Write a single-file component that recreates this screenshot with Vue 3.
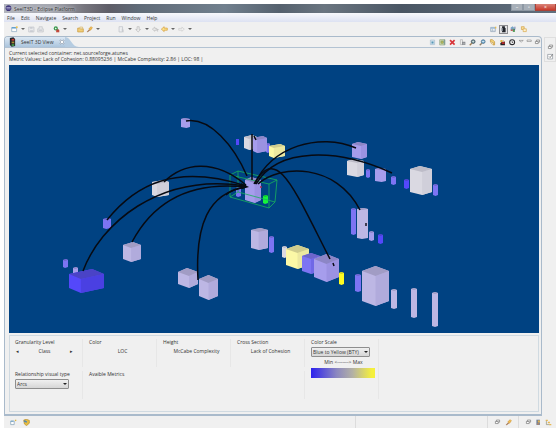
<script setup>
import { h, ref } from 'vue'

const glyphs = {
  app: [['M5 0.5A4 4 0 1 0 5 8.5A4 4 0 0 0 5 0.5Z', '#3c3478'], ['M2 3.5H8M2 5.5H8', 'none', '#c9c4e8']],
  newItem: [['M1 2.5H8V8H1Z', '#fdfdfd', '#8aa6c0'], ['M1 1.5H7V3.5H1Z', '#5d9fd0'], ['M7 0.5H9.5V3H7Z', '#eabf4a']],
  save: [['M1 1.5H8.5V8.5H1Z', '#e9eaec', '#bfc2c8'], ['M3 1.5H6.5V4H3ZM3 6H7V8.5H3Z', '#c9ccd2']],
  saveAll: [['M3 1H7.5V4H9V8.5H1V4H3Z', '#e6e6e8', '#c3c5ca'], ['M2.5 5H7.5V7H2.5Z', '#c9ccd2']],
  run: [['M4 0.5A3 3 0 1 0 4 6.5A3 3 0 0 0 4 0.5Z', '#3e9a50'], ['M3 2L5.5 3.5L3 5Z', '#fff'], ['M4.5 5.5H9V9H4.5Z', '#c44a3c'], ['M6 4.5H8V6H6Z', '#7d3a30']],
  folder: [['M1 3H4L5 4H9V8.5H1Z', '#f2ce78', '#c99a3e'], ['M4 1.5H8V4H4Z', '#f7edd0', '#d5b670']],
  torch: [['M1 8.5L4.5 4.5L6 6L2.5 9Z', '#a77b58'], ['M4 4L7.5 1L9 2.5L6.5 6Z', '#f1bd52', '#d29a3a']],
  page: [['M1.5 1H6.5V8.5H1.5Z', '#eeeff1', '#bcc0c6'], ['M6 4V8M7.5 5V9', 'none', '#c5c8cc']],
  down: [['M3 1H6V5H8L4.5 8.5L1 5H3Z', '#ececec', '#bcbcbc']],
  back: [['M0.5 4.5L4 1.5V3.5H7V6H4V7.5Z', '#eaeaea', '#bcbcbc'], ['M8 5V8M9.5 5H7', 'none', '#bcbcbc']],
  backGold: [['M0.5 4.5L4.5 1V3H9V6H4.5V8Z', '#fae08c', '#d79d37']],
  next: [['M9 4.5L5.5 1.5V3.5H1V6H5.5V7.5Z', '#f0f0f0', '#cfcfcf']],
  openView: [['M1 2H7.5V8H1Z', '#fff', '#8b9db3'], ['M1 2H7.5V4H1Z', '#9cbad6'], ['M7 1H9V3.5H7Z', '#e8bd4b'], ['M3.5 4V8M1 6H7.5', 'none', '#a9b9c9']],
  seeit: [['M3 0.5H7V3H8V9H3Z', '#22252c'], ['M2 3H4V7H2Z', '#8d939e']],
  java: [['M1 2L4 0.5L6 3L4 6H1Z', '#79a4c7'], ['M4 4H7V8.5H4Z', '#599c5a'], ['M7 1V4.5L6 6', 'none', '#304c94'], ['M1 5H4V7H1Z', '#bd554a']],
  sync: [['M2 1H6V5H2Z', '#f7df9d', '#d4a245'], ['M4.5 4H9V8H4.5Z', '#fff3cf', '#d8a84d']],
  doc: [['M2 1.5H8V8H2Z', '#d8e8f2', '#a6bccd'], ['M3.5 3.5H6.5V6.5H3.5Z', '#5796b4']],
  layers: [['M1 1H8.5V8.5H1Z', '#d8dfa9', '#8fa58b'], ['M3 3H6V6H3Z', '#e8cf46', '#6e8f68'], ['M7.5 1V8', 'none', '#4d7b94']],
  cross: [['M1.5 1.5L8 8M8 1.5L1.5 8', 'none', '#d8353a', 2.4]],
  trash: [['M2 1H5V8H2Z', '#efefef', '#b1b1b1'], ['M4.5 4H9V8.5H4.5Z', '#777b80'], ['M6 5V8M7.5 5V8', 'none', '#d0d0d0']],
  zoomIn: [['M6 1A2.7 2.7 0 1 0 6 6.4A2.7 2.7 0 0 0 6 1Z', '#5c7c89', '#3c4d58'], ['M4 6L1 9', 'none', '#9b7b50', 1.8], ['M4.5 3.7H7.5M6 2.2V5.2', 'none', '#e9f6e6']],
  zoomOut: [['M6 1A2.7 2.7 0 1 0 6 6.4A2.7 2.7 0 0 0 6 1Z', '#75aed0', '#406684'], ['M4 6L1 9', 'none', '#8e806b', 1.8], ['M4.5 3.7H7.5', 'none', '#fff']],
  link: [['M2 1H5L8 4V8.5H6V5L2 4Z', '#f4d881', '#c19133'], ['M2 5L5 8', 'none', '#d4a244']],
  figure: [['M4 4H8.5V9H2V6Z', '#252326'], ['M2 1.5H5V4.5H2Z', '#e3b33c'], ['M4 4.5H8V7H4Z', '#c52a2c'], ['M6 2L8 4', 'none', '#ab6b32']],
  target: [['M4.5 1A3.5 3.5 0 1 0 4.5 8A3.5 3.5 0 0 0 4.5 1Z', '#fafafa', '#292a2e', 1.5], ['M4.5 3V5H6', 'none', '#222']],
  menu: [['M1.5 2H7.5L4.5 4.5Z', '#fff', '#777', 0.8]],
  minimize: [['M1.5 1.5H7.5V3.5H1.5Z', '#fff', '#777', 0.8]],
  restore: [['M3.5 1.5H8V4.5H3.5Z', '#fff', '#777'], ['M2 3.5H6V6.5H2Z', '#fff', '#777']],
  task: [['M1 2H8V8.5H1Z', '#fff', '#8b929b'], ['M3 5L4.5 6.5L8 2', 'none', '#555']],
  fast: [['M1 3H6V8H1Z', '#fff', '#829fb5'], ['M1 2.5H5V4H1Z', '#73a4c6'], ['M7 1H9V3H7Z', '#e2b73e']],
  shield: [['M1 1.5L5 0.5L9 2V6L5 9.5L2 7Z', '#e6bd42', '#b88d28'], ['M2 1.5L6 3.5L5 5.5L1 4Z', '#5589ad']],
  grid: [['M2 1H7V8.5H2Z', '#6d7e96'], ['M4 2H7V5H4Z', '#e2b453'], ['M3 6H6V8H3Z', '#bd8761']],
  tree: [['M1 1H4V3H1ZM4 4H7V6H4ZM6 7H9V9H6Z', '#e6b751'], ['M2 3V8H6', 'none', '#8f8f78']],
}

const Glyph = ({ name }) =>
  h('svg', { viewBox: '0 0 10 10', class: 'glyph', 'aria-hidden': 'true' },
    glyphs[name].map(([d, fill, stroke, width]) =>
      h('path', { d, fill, stroke: stroke || 'none', 'stroke-width': width || 1 })))
Glyph.props = ['name']

const menus = ['File', 'Edit', 'Navigate', 'Search', 'Project', 'Run', 'Window', 'Help']
const toolGroups = [
  [['newItem', true], ['save'], ['saveAll']],
  [['run', true]],
  [['folder'], ['torch', true]],
  [['page', true], ['down', true], ['back'], ['backGold', true], ['next', true]],
]
const perspectives = ['openView', 'seeit', 'java', 'sync']
const viewTools = ['doc', 'layers', 'cross', 'trash', 'zoomIn', 'zoomOut', 'link', 'figure', 'target']
const viewControls = ['menu', 'minimize', 'restore']
const metrics = [
  ['Color', 'LOC'],
  ['Height', 'McCabe Complexity'],
  ['Cross Section', 'Lack of Cohesion'],
]
const relation = ref('Arcs')
const scale = ref('Blue to Yellow (BTY)')

const tones = {
  white: ['#dad9e2', '#d0cfda', '#bdbcc8'],
  pale: ['#bdb7e4', '#b1abdc', '#a19cc4'],
  lilac: ['#a69dec', '#9b92e2', '#8c86c6'],
  violet: ['#7d74f3', '#7068e6', '#6c65cb'],
  blue: ['#5448fa', '#4a40e2', '#4a43c6'],
  yellow: ['#fbf8a6', '#ece8a0', '#cfcc8e'],
  gold: ['#fdfb22', '#e6e420', '#d1cf1f'],
  green: ['#16f53a', '#14dd34', '#13c02e'],
}

// [x, y, width, height, tone, position of the front edge, depth of the top face]
const blocks = [
  [181, 118, 9, 10, 'lilac', 0.6, 1], [152, 180, 17, 17, 'white', 0.3, 2],
  [103, 218, 8, 11, 'violet', 0.4, 1], [63, 259, 5, 9, 'violet', 0.4, 1], [73, 267, 5, 9, 'lilac', 0.4, 1],
  [69, 269, 35, 24, 'blue', 0.34, 5], [123, 242, 18, 20, 'pale', 0.45, 3],
  [178, 268, 20, 20, 'pale', 0.55, 4], [199, 275, 19, 25, 'pale', 0.5, 4],
  [236, 139, 3, 6, 'blue', 0.4, 0], [244, 135, 13, 15, 'white', 0.4, 2],
  [266, 143, 4, 10, 'violet', 0.4, 1], [253, 136, 14, 17, 'lilac', 0.3, 2],
  [269, 144, 16, 14, 'yellow', 0.3, 2],
  [236, 187, 5, 10, 'violet', 0.4, 1], [245, 177, 16, 26, 'lilac', 0.6, 3], [263, 195, 5, 9, 'green', 0.4, 1],
  [352, 142, 15, 17, 'lilac', 0.6, 2], [347, 159, 17, 18, 'white', 0.6, 2],
  [366, 169, 4, 9, 'violet', 0.5, 1], [375, 168, 11, 14, 'lilac', 0.6, 1],
  [391, 176, 5, 9, 'violet', 0.5, 1], [404, 179, 5, 10, 'blue', 0.5, 1],
  [410, 166, 22, 29, 'white', 0.55, 3], [433, 184, 5, 12, 'violet', 0.5, 1],
  [251, 228, 17, 22, 'pale', 0.45, 2], [269, 236, 5, 17, 'violet', 0.5, 1],
  [282, 246, 5, 12, 'white', 0.5, 1], [286, 245, 23, 24, 'yellow', 0.5, 4],
  [302, 253, 18, 21, 'violet', 0.5, 3], [314, 254, 25, 28, 'lilac', 0.5, 5],
  [339, 272, 5, 13, 'gold', 0.5, 1],
  [351, 208, 5, 27, 'violet', 0.5, 1], [357, 208, 11, 31, 'pale', 0.45, 1],
  [369, 231, 5, 10, 'lilac', 0.5, 1], [378, 234, 5, 10, 'blue', 0.5, 1],
  [355, 274, 6, 18, 'violet', 0.5, 1], [362, 266, 27, 40, 'pale', 0.5, 5],
  [391, 289, 6, 20, 'pale', 0.5, 1], [411, 288, 6, 30, 'pale', 0.5, 1], [432, 292, 6, 35, 'pale', 0.5, 1],
].map(([x, y, w, t, tone, split, d]) => {
  const m = x + w * split
  const n = x + w * (1 - split)
  const r = x + w
  const b = y + t
  const [left, right, top] = tones[tone]
  if (w < 12) {
    return [
      { fill: left, points: `${x},${y + d} ${n},${y} ${r},${y + d} ${r},${b - d} ${m},${b} ${x},${b - d}` },
      { fill: top, points: `${x},${y + d} ${n},${y} ${r},${y + d} ${m},${y + 2 * d}` },
    ]
  }
  return [
    { fill: left, points: `${x},${y + d} ${n},${y} ${r},${y + d} ${r},${b - d} ${m},${b} ${x},${b - d}` },
    { fill: right, points: `${m},${y + 2 * d} ${r},${y + d} ${r},${b - d} ${m},${b}` },
    { fill: top, points: `${x},${y + d} ${n},${y} ${r},${y + d} ${m},${y + 2 * d}` },
  ]
}).flat()

const arcs = [
  'M186 121C210 117 234 146 247 176',
  'M164 182C183 163 214 158 246 185',
  'M107 220C135 185 175 163 246 186',
  'M83 271C100 225 158 172 246 186',
  'M132 242C150 208 182 180 246 187',
  'M198 280C195 225 208 193 246 187',
  'M226 195Q234 188 246 187',
  'M252 180V134M254 136L256 140',
  'M255 184C270 147 320 132 356 148',
  'M256 184C278 147 337 148 392 173',
  'M258 184C280 164 336 163 360 210',
  'M254 184C277 144 293 187 330 259M333 263L334 266',
]
</script>

<template>
  <div class="window">
    <header class="titlebar">
      <Glyph name="app" />
      <span class="title">SeeIT3D - Eclipse Platform</span>
      <div class="caption">
        <button aria-label="Minimize">–</button>
        <button aria-label="Maximize">▫</button>
        <button class="close" aria-label="Close">×</button>
      </div>
    </header>
    <nav class="menubar">
      <button v-for="m in menus" :key="m">{{ m }}</button>
    </nav>
    <div class="toolbar">
      <div v-for="(g, i) in toolGroups" :key="i" class="group">
        <button v-for="[name, drop] in g" :key="name" :class="{ drop }" :aria-label="name"><Glyph :name="name" /></button>
      </div>
      <div class="perspectives">
        <button v-for="p in perspectives" :key="p" :class="{ active: p === 'seeit' }" :aria-label="p"><Glyph :name="p" /></button>
      </div>
    </div>
    <div class="workbench">
      <main class="view">
        <div class="tabs">
          <div class="tab">
            <svg class="logo" viewBox="0 0 8 11" aria-hidden="true">
              <path d="M1 1L5 0L7 2V10L3 11L1 9Z" fill="#26252a" />
              <path d="M3 2H6V4H3Z" fill="#c33b32" /><path d="M3 5H6V7H3Z" fill="#a88b35" /><path d="M3 8H6V10H3Z" fill="#3e9a4a" />
            </svg>
            <span>SeeIT 3D View</span>
            <svg class="tabclose" viewBox="0 0 6 6" aria-hidden="true"><path d="M1 1H2L3 2L4 1H5V2L4 3L5 4V5H4L3 4L2 5H1V4L2 3L1 2Z" fill="#fff" stroke="#8795a6" stroke-width=".6" /></svg>
          </div>
          <svg class="curve" viewBox="0 0 18 11" preserveAspectRatio="none" aria-hidden="true"><path d="M0 0C8 0 8 11 18 11H0Z" fill="#b5cce1" /></svg>
          <div class="viewtools">
            <button v-for="t in viewTools" :key="t" :aria-label="t"><Glyph :name="t" /></button>
            <button v-for="t in viewControls" :key="t" class="control" :aria-label="t"><Glyph :name="t" /></button>
          </div>
        </div>
        <div class="content">
          <div class="info">
            <p>Current selected container: net.sourceforge.atunes</p>
            <p>Metric Values: Lack of Cohesion: 0.88095236 | McCabe Complexity: 2.86 | LOC: 98 |</p>
          </div>
          <svg class="scene" viewBox="9 65 530 268" role="img" aria-label="Class dependencies">
            <polygon v-for="(f, i) in blocks" :key="i" :points="f.points" :fill="f.fill" />
            <path class="wire" d="M230 175L269 184V208L230 197ZM238 171L277 180L275 202L238 192ZM230 175L238 171M269 184L277 180M269 208L275 202M230 197L238 192" />
            <path v-for="a in arcs" :key="a" class="arc" :d="a" />
            <path d="M241 183L249 187L242 189Z" fill="#070a12" />
            <circle cx="261" cy="187" r="1" fill="#a6284e" />
            <path d="M366 223V226" stroke="#14131f" stroke-width="1.500" />
          </svg>
          <div class="panel">
            <section class="cell">
              <h2>Granularity Level</h2>
              <div class="stepper"><button aria-label="Previous">◂</button><span>Class</span><button aria-label="Next">▸</button></div>
            </section>
            <section v-for="[name, value] in metrics" :key="name" class="cell">
              <h2>{{ name }}</h2>
              <div class="value">{{ value }}</div>
            </section>
            <section class="cell scale">
              <h2><label for="scale">Color Scale</label></h2>
              <div class="select wide"><select id="scale" v-model="scale"><option>Blue to Yellow (BTY)</option></select></div>
              <div class="range">Min &lt;-------&gt; Max</div>
              <div class="ramp"></div>
            </section>
            <section class="cell lower">
              <h2><label for="relation">Relationship visual type</label></h2>
              <div class="select"><select id="relation" v-model="relation"><option>Arcs</option></select></div>
            </section>
            <section class="cell available">
              <h2>Avaible Metrics</h2>
            </section>
          </div>
        </div>
      </main>
      <aside class="rail">
        <div class="dock">
          <button aria-label="Restore"><Glyph name="restore" /></button>
          <button aria-label="Task list"><Glyph name="task" /></button>
        </div>
      </aside>
    </div>
    <footer class="status">
      <div class="trim first"><Glyph name="fast" /><Glyph name="shield" /></div>
      <div class="trim message"></div>
      <div class="trim"><Glyph name="restore" /><Glyph name="torch" /></div>
      <div class="trim last"><Glyph name="restore" /><Glyph name="grid" /><Glyph name="tree" /></div>
    </footer>
  </div>
</template>

<style>
body {
  background: #fff;
}
</style>

<style scoped>
.window {
  margin: 4px 3px 2px 4px;
  background: #f0f0f0;
  color: #333;
  font-family: "Open Sans", "Noto Sans", sans-serif;
  font-size: 5px;
  line-height: 6px;
}
button {
  display: flex;
  align-items: center;
  justify-content: center;
  padding: 0;
  border: 0;
  background: none;
  color: inherit;
  font: inherit;
}
.glyph {
  display: block;
  flex: none;
  width: 7px;
  height: 7px;
}
.titlebar {
  display: flex;
  align-items: center;
  gap: 2px;
  height: 9px;
  padding-left: 1px;
  background: linear-gradient(90deg, #b2b5be 0, #a2a5ae 50px, #77767e 80px, #5e5d67 105px, #606b78 135px, #71808e 40%, #55616e 50%, #6a7580 58%, #4a5664 72%, #616f7e 100%);
}
.title {
  flex: 1;
  text-shadow: 0 0 3px #fff;
}
.caption {
  display: flex;
  align-self: flex-start;
}
.caption button {
  width: 12px;
  height: 7px;
  border: 1px solid #8d98a4;
  border-top: 0;
  background: #a7afb8;
  color: #fff;
  line-height: 5px;
}
.caption .close {
  width: 21px;
  border-color: #a94238;
  background: linear-gradient(#d98378, #c83a2b);
}
.menubar {
  display: flex;
  gap: 6px;
  height: 9px;
  padding-left: 3px;
  background: linear-gradient(#f7f8fc, #dde2f2);
}
.toolbar {
  display: flex;
  align-items: center;
  height: 14px;
  padding: 0 28px 0 6px;
}
.group {
  display: flex;
  gap: 1px;
  padding-right: 8px;
}
.group:nth-child(3) {
  padding-right: 16px;
}
.group button {
  width: 8px;
}
.group .drop {
  gap: 3px;
  width: 16px;
}
.drop::after {
  content: "";
  border: 2px solid transparent;
  border-top-color: #666;
  border-bottom: 0;
}
.perspectives {
  display: flex;
  gap: 1px;
  margin-left: auto;
}
.perspectives button {
  width: 9px;
  height: 9px;
}
.perspectives .active {
  background: #e2e2e4;
  outline: 1px solid #8c8c90;
  outline-offset: -1px;
}
.workbench {
  display: flex;
}
.view {
  flex: 1;
  min-width: 0;
  border: 1px solid #a9bacb;
  border-bottom-width: 2px;
  border-radius: 4px 4px 0 0;
}
.tabs {
  display: flex;
  height: 10px;
  border-bottom: 1px solid #b3c3d3;
}
.tab {
  display: flex;
  align-items: center;
  gap: 5px;
  padding-left: 4px;
  border-radius: 3px 0 0 0;
  background: linear-gradient(#dce8f3, #abc5dd);
}
.logo {
  width: 7px;
  height: 10px;
}
.tabclose {
  width: 6px;
  height: 6px;
}
.curve {
  width: 14px;
  height: 10px;
}
.viewtools {
  display: flex;
  align-items: center;
  gap: 2px;
  margin-left: auto;
  padding-right: 1px;
}
.viewtools button {
  width: 8px;
}
.viewtools .control {
  width: 6px;
}
.content {
  padding: 2px 2px 2px 4px;
}
.info {
  padding: 0 0 3px;
}
.info p {
  margin: 0;
}
.scene {
  display: block;
  width: 100%;
  background: #004282;
}
.arc {
  fill: none;
  stroke: #070a12;
  stroke-width: 1.5;
}
.wire {
  fill: none;
  stroke: #18b35c;
  stroke-width: 0.8;
}
.panel {
  display: grid;
  grid-template-columns: repeat(5, 68px);
  grid-template-rows: 28px 28px;
  gap: 4px 6px;
  margin-top: 2px;
  padding: 3px 5px 12px;
  border: 1px solid #d0dae1;
}
.cell {
  border-right: 1px solid #e7e7e7;
}
.cell h2 {
  margin: 0 0 3px;
  font-size: 5px;
  font-weight: 400;
}
.stepper {
  display: flex;
  justify-content: space-between;
  padding: 0 9px 0 1px;
}
.value {
  text-align: center;
}
.scale {
  grid-row: 1 / 3;
  grid-column: 5;
}
.cell.lower h2,
.scale h2 {
  margin-bottom: 2px;
}
.available {
  grid-column: 2 / 5;
}
.select {
  position: relative;
  width: 54px;
}
.select.wide {
  width: 59px;
}
.select::after {
  content: "";
  position: absolute;
  top: 4px;
  right: 2px;
  border: 2px solid transparent;
  border-top-color: #222;
  border-bottom: 0;
  pointer-events: none;
}
select {
  display: block;
  width: 100%;
  height: 10px;
  padding: 0 1px;
  border: 1px solid #8e8e8e;
  border-radius: 1px;
  background: linear-gradient(#f0f0f0, #d6d6d6);
  color: inherit;
  font: inherit;
  appearance: none;
}
.range {
  padding: 2px 2px 3px 0;
  text-align: center;
}
.ramp {
  height: 10px;
  margin-right: 3px;
  background: linear-gradient(90deg, #2d22ee, #8b87c0 40%, #b3b1a5 65%, #f5f03c 95%);
}
.rail {
  width: 12px;
  padding: 1px 0 0 2px;
}
.dock {
  display: grid;
  gap: 2px;
  justify-content: center;
  padding: 6px 0 1px;
  border: 1px solid #dfdfdf;
}
.status {
  display: flex;
  align-items: center;
  height: 12px;
}
.trim {
  display: flex;
  align-items: center;
  gap: 4px;
  height: 12px;
  padding: 0 6px;
  border-left: 1px solid #dcdcdc;
}
.first {
  flex: 358;
  gap: 6px;
  border: 0;
}
.message {
  flex: 126;
}
.last {
  gap: 3px;
  padding-right: 4px;
}
</style>
